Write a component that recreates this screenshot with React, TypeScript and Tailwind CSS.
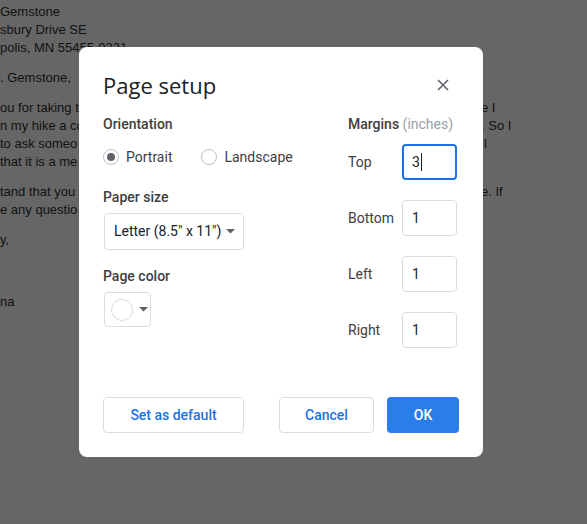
import React from "react";

function DocLine({ left, right, className = "" }: { left: string; right?: string; className?: string }) {
  return (
    <div className={"flex h-[18px] leading-[18px] whitespace-nowrap " + className}>
      <span className="w-[481px] shrink-0 overflow-hidden">{left}</span>
      {right ? <span>{right}</span> : null}
    </div>
  );
}

function Caret() {
  return (
    <svg width="9" height="5" viewBox="0 0 9 5" className="shrink-0">
      <path d="M0 0 L9 0 L4.5 4.5 Z" fill="#5f6368" />
    </svg>
  );
}

function MarginRow({ label, value, focused }: { label: string; value: string; focused?: boolean }) {
  return (
    <div className="flex items-center">
      <div className="w-[54px] text-[14px] text-[#3c4043]">{label}</div>
      <div
        className={
          "flex h-[36px] w-[55px] items-center rounded-[4px] px-[8px] text-[14px] text-[#202124] " +
          (focused ? "border-2 border-[#1a73e8]" : "border border-[#dadce0] pl-[9px]")
        }
      >
        <span>{value}</span>
        {focused ? <span className="ml-[1px] inline-block h-[18px] w-[1px] bg-[#202124]" /> : null}
      </div>
    </div>
  );
}

export default function App() {
  return (
    <div className="relative h-[524px] w-[587px] overflow-hidden bg-[#666666]">
      {/* Background document */}
      <div className="pt-[3px] text-[13px] text-[#111111]" style={{ fontFamily: '"Liberation Sans", Arial, sans-serif' }}>
        <DocLine left="Gemstone" />
        <DocLine left="sbury Drive SE" />
        <DocLine left="polis, MN 55455-0231" />
        <DocLine className="mt-[12px]" left=". Gemstone," />
        <DocLine className="mt-[12px]" left="ou for taking t" right="e I" />
        <DocLine left="n my hike a co" right=". So I" />
        <DocLine left="to ask someo" right="ll" />
        <DocLine left="that it is a me" />
        <DocLine className="mt-[12px]" left="tand that you" right="e. If" />
        <DocLine left="e any questio" />
        <DocLine className="mt-[12px]" left="y," />
        <DocLine className="mt-[44px]" left="na" />
      </div>

      {/* Dialog overlay */}
      <div
        className="absolute left-[79px] top-[47px] h-[410px] w-[404px] rounded-[8px] bg-white px-[24px] pt-[24px]"
        style={{ fontFamily: 'Roboto, "Noto Sans", sans-serif' }}
      >
        <div className="flex h-[28px] items-center justify-between">
          <div className="text-[22px] leading-[28px] text-[#202124]" style={{ fontFamily: '"Open Sans", Roboto, sans-serif' }}>
            Page setup
          </div>
          <svg width="12" height="12" viewBox="0 0 12 12" className="mr-[10px]">
            <path d="M1 1 L11 11 M11 1 L1 11" stroke="#5f6368" strokeWidth="1.6" />
          </svg>
        </div>

        <div className="mt-[15px] flex">
          {/* Left column */}
          <div className="w-[245px]">
            <div className="text-[14px] font-medium leading-[20px] text-[#3c4043]">Orientation</div>
            <div className="mt-[13px] flex h-[20px] items-center text-[14px] text-[#3c4043]">
              <span className="flex h-[16px] w-[16px] items-center justify-center rounded-full border border-[#bdc1c6]">
                <span className="h-[8px] w-[8px] rounded-full bg-[#5f6368]" />
              </span>
              <span className="ml-[7px]">Portrait</span>
              <span className="ml-[29px] h-[16px] w-[16px] rounded-full border border-[#bdc1c6]" />
              <span className="ml-[7px]">Landscape</span>
            </div>

            <div className="mt-[20px] text-[14px] font-medium leading-[20px] text-[#3c4043]">Paper size</div>
            <div className="ml-[1px] mt-[6px] flex h-[37px] w-[140px] items-center justify-between rounded-[4px] border border-[#dadce0] pl-[9px] pr-[8px] text-[14px] text-[#202124]">
              <span>Letter (8.5" x 11")</span>
              <Caret />
            </div>

            <div className="mt-[16px] text-[14px] font-medium leading-[20px] text-[#3c4043]">Page color</div>
            <div className="ml-[1px] mt-[6px] flex h-[35px] w-[47px] items-center rounded-[4px] border border-[#dadce0] pl-[6px]">
              <span className="h-[22px] w-[22px] rounded-full border border-[#dadce0] bg-white" />
              <span className="ml-[6px]">
                <Caret />
              </span>
            </div>
          </div>

          {/* Right column */}
          <div>
            <div className="text-[14px] leading-[20px]">
              <span className="font-medium text-[#3c4043]">Margins</span>{" "}
              <span className="text-[#9aa0a6]">(inches)</span>
            </div>
            <div className="mt-[10px] flex flex-col gap-[20px]">
              <MarginRow label="Top" value="3" focused />
              <MarginRow label="Bottom" value="1" />
              <MarginRow label="Left" value="1" />
              <MarginRow label="Right" value="1" />
            </div>
          </div>
        </div>

        <div className="mt-[49px] flex items-center text-[14px] font-medium">
          <button className="h-[36px] w-[141px] rounded-[4px] border border-[#dadce0] text-[#1a73e8]">Set as default</button>
          <button className="ml-[35px] h-[36px] w-[95px] rounded-[4px] border border-[#dadce0] text-[#1a73e8]">Cancel</button>
          <button className="ml-[13px] h-[36px] w-[72px] rounded-[4px] bg-[#2b7de9] text-white">OK</button>
        </div>
      </div>
    </div>
  );
}
